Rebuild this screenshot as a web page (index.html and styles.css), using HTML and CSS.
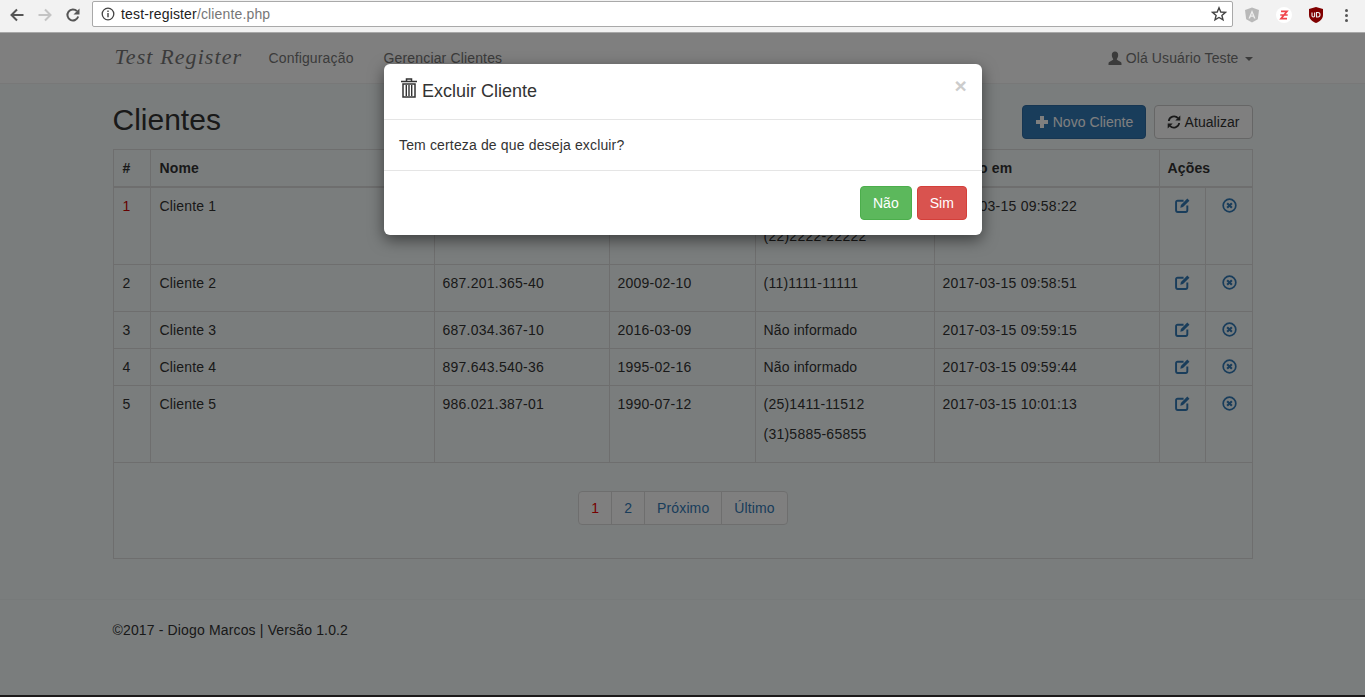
FILE: index.html
```html
<!DOCTYPE html>
<html lang="pt-BR">
<head>
    <meta charset="UTF-8">
    <title>Clientes</title>
    <link rel="stylesheet" href="styles.css">
</head>
<body>

<!-- barra do navegador -->
<div class="browser-bar">
    <svg class="nav-icon" viewBox="0 0 16 16"><path d="M14.5 8H3M8 2.5 2.5 8 8 13.5" fill="none" stroke="#555" stroke-width="2"/></svg>
    <svg class="nav-icon" viewBox="0 0 16 16"><path d="M1.5 8H13M8 2.5 13.5 8 8 13.5" fill="none" stroke="#c4c4c4" stroke-width="2"/></svg>
    <svg class="nav-icon" viewBox="0 0 16 16"><path d="M13.2 9.5A5.5 5.5 0 1 1 12 4.2" fill="none" stroke="#555" stroke-width="2"/><path d="M14.5 1.5v6h-6z" fill="#555"/></svg>
    <div class="address">
        <svg class="info-icon" viewBox="0 0 14 14"><circle cx="7" cy="7" r="5.8" fill="none" stroke="#444" stroke-width="1.3"/><path d="M7 6v4.2M7 3.6v1.4" stroke="#444" stroke-width="1.4"/></svg>
        <span class="host">test-register</span><span class="path">/cliente.php</span>
        <svg class="star-icon" viewBox="0 0 16 16"><path d="M8 1.8l1.8 4.2 4.6.4-3.5 3 1.1 4.5L8 11.5l-4 2.4 1.1-4.5-3.5-3 4.6-.4z" fill="none" stroke="#444" stroke-width="1.4"/></svg>
    </div>
    <div class="extensions">
        <svg class="ext-icon" viewBox="0 0 16 16"><path d="M8 .5 15 3l-1.2 9.300L8 15.500 2.200 12.300 1 3z" fill="#b9b9b9"/><path d="M8 3 4.500 11.500H6l.7-1.800h2.600l.7 1.800h1.500zM7.200 8.500 8 6.300l.8 2.200z" fill="#eee"/></svg>
        <svg class="ext-icon" viewBox="0 0 16 16"><circle cx="8" cy="8" r="8" fill="#fff"/><path d="M5 4.300h6L5 11.700h6M4.300 8h7.400" fill="none" stroke="#f0454c" stroke-width="1.700"/></svg>
        <svg class="ext-icon" viewBox="0 0 16 16"><path d="M8 0 15 2v6c0 4-3.500 6.800-7 8C4.500 14.800 1 12 1 8V2z" fill="#800000"/><path d="M4 5.500v3.300q0 1.200 1.300 1.200T6.600 8.800V5.500M8.500 5.500v4.500H10q2 0 2-2.200 0-2.300-2-2.300z" fill="none" stroke="#eee" stroke-width="1.100"/></svg>
        <div class="menu-dots"><i></i><i></i><i></i></div>
    </div>
</div>

<div class="page">
    <!-- menu -->
    <nav class="navbar">
        <div class="container navbar-inner">
            <a class="brand">Test Register</a>
            <a class="nav-link">Configuração</a>
            <a class="nav-link">Gerenciar Clientes</a>
            <a class="nav-link user-link">
                <svg class="icon" viewBox="0 0 14 14"><path d="M7 .5c2 0 3.200 1.500 3.200 3.500S9.200 7.400 8.800 8c0 1 .8 1.300 2.200 1.900 1.300.6 2.500 1 2.500 2.600V14H.5v-1.500c0-1.600 1.200-2 2.500-2.600C4.400 9.300 5.200 9 5.200 8 4.800 7.400 3.800 6 3.800 4S5 .5 7 .5z" fill="currentColor"/></svg>
                Olá Usuário Teste <span class="caret"></span>
            </a>
        </div>
    </nav>

    <div class="container">
        <div class="title-row">
            <h1>Clientes</h1>
            <div class="actions">
                <a class="btn btn-primary">
                    <svg class="icon" viewBox="0 0 14 14"><path d="M5 1h4v4h4v4H9v4H5V9H1V5h4z" fill="currentColor"/></svg>
                    Novo Cliente
                </a>
                <a class="btn btn-default">
                    <svg class="icon" viewBox="0 0 14 14"><path d="M1.800 6A5.300 5.300 0 0 1 11 3.200M12.200 8A5.300 5.300 0 0 1 3 10.800" fill="none" stroke="currentColor" stroke-width="1.800"/><path d="M13.300.6v5h-5zM.7 13.400v-5h5z" fill="currentColor"/></svg>
                    Atualizar
                </a>
            </div>
        </div>

        <table class="table">
            <colgroup>
                <col class="c-id"><col class="c-nome"><col class="c-cpf"><col class="c-nasc"><col class="c-tel"><col class="c-data"><col class="c-acao"><col class="c-acao2">
            </colgroup>
            <thead>
                <tr>
                    <th>#</th>
                    <th>Nome</th>
                    <th>CPF</th>
                    <th>Nascimento</th>
                    <th>Telefones</th>
                    <th>Criado em</th>
                    <th colspan="2">Ações</th>
                </tr>
            </thead>
            <tbody>
                <tr>
                    <td class="current">1</td>
                    <td>Cliente 1</td>
                    <td class="num">123.456.789-00</td>
                    <td class="num">1985-05-20</td>
                    <td class="num"><p>(11)1111-11111</p><p>(22)2222-22222</p></td>
                    <td class="num">2017-03-15 09:58:22</td>
                    <td class="act"><svg class="act-icon"><use href="#i-edit"/></svg></td>
                    <td class="act"><svg class="act-icon"><use href="#i-remove"/></svg></td>
                </tr>
                <tr>
                    <td>2</td>
                    <td>Cliente 2</td>
                    <td class="num">687.201.365-40</td>
                    <td class="num">2009-02-10</td>
                    <td class="num"><p>(11)1111-11111</p></td>
                    <td class="num">2017-03-15 09:58:51</td>
                    <td class="act"><svg class="act-icon"><use href="#i-edit"/></svg></td>
                    <td class="act"><svg class="act-icon"><use href="#i-remove"/></svg></td>
                </tr>
                <tr>
                    <td>3</td>
                    <td>Cliente 3</td>
                    <td class="num">687.034.367-10</td>
                    <td class="num">2016-03-09</td>
                    <td>Não informado</td>
                    <td class="num">2017-03-15 09:59:15</td>
                    <td class="act"><svg class="act-icon"><use href="#i-edit"/></svg></td>
                    <td class="act"><svg class="act-icon"><use href="#i-remove"/></svg></td>
                </tr>
                <tr>
                    <td>4</td>
                    <td>Cliente 4</td>
                    <td class="num">897.643.540-36</td>
                    <td class="num">1995-02-16</td>
                    <td>Não informado</td>
                    <td class="num">2017-03-15 09:59:44</td>
                    <td class="act"><svg class="act-icon"><use href="#i-edit"/></svg></td>
                    <td class="act"><svg class="act-icon"><use href="#i-remove"/></svg></td>
                </tr>
                <tr>
                    <td>5</td>
                    <td>Cliente 5</td>
                    <td class="num">986.021.387-01</td>
                    <td class="num">1990-07-12</td>
                    <td class="num"><p>(25)1411-11512</p><p>(31)5885-65855</p></td>
                    <td class="num">2017-03-15 10:01:13</td>
                    <td class="act"><svg class="act-icon"><use href="#i-edit"/></svg></td>
                    <td class="act"><svg class="act-icon"><use href="#i-remove"/></svg></td>
                </tr>
                <tr>
                    <td colspan="8" class="pager-cell">
                        <ul class="pagination">
                            <li class="active"><a>1</a></li>
                            <li><a>2</a></li>
                            <li><a>Próximo</a></li>
                            <li><a>Último</a></li>
                        </ul>
                    </td>
                </tr>
            </tbody>
        </table>
    </div>

    <footer class="footer">
        <div class="container">©2017 - Diogo Marcos | Versão 1.0.2</div>
    </footer>

    <!-- modal de exclusão -->
    <div class="backdrop"></div>
    <div class="modal">
        <div class="modal-header">
            <h4>
                <svg class="trash-icon" viewBox="0 0 18 20"><path d="M6.500 3V1h5v2M1 3.500h16M3 6h12v13H3z" fill="none" stroke="#333" stroke-width="1.500"/><path d="M6.300 7v11M9 7v11M11.700 7v11" stroke="#333" stroke-width="1.400"/></svg>
                Excluir Cliente
            </h4>
            <span class="close">×</span>
        </div>
        <div class="modal-body">Tem certeza de que deseja excluir?</div>
        <div class="modal-footer">
            <a class="btn btn-success">Não</a>
            <a class="btn btn-danger">Sim</a>
        </div>
    </div>
</div>

<div class="desktop-strip"></div>

<!-- ícones da tabela -->
<svg class="defs" width="0" height="0">
    <symbol id="i-edit" viewBox="0 0 14 14">
        <path d="M8 2.500H2.500Q1 2.500 1 4v7.500Q1 13 2.500 13H10q1.500 0 1.500-1.500V7" fill="none" stroke="currentColor" stroke-width="1.800"/>
        <path d="M11.500.5 13.500 2.500 7.500 8.500 5 9l.5-2.500z" fill="currentColor"/>
    </symbol>
    <symbol id="i-remove" viewBox="0 0 14 14">
        <circle cx="7" cy="7" r="5.900" fill="none" stroke="currentColor" stroke-width="1.600"/>
        <path d="M4.800 4.800l4.400 4.400M9.200 4.800 4.800 9.200" stroke="currentColor" stroke-width="2"/>
    </symbol>
</svg>

</body>
</html>
```

FILE: styles.css
```css
* {
    box-sizing: border-box;
}

html, body {
    height: 697px;
    margin: 0;
    overflow: hidden;
}

body {
    display: flex;
    flex-direction: column;
    font-family: 'Liberation Sans', Arial, sans-serif;
    font-size: 14px;
    line-height: 20px;
    letter-spacing: .15px;
    color: #333;
    background-color: #f5fbfb;
}

/* barra do navegador */
.browser-bar {
    height: 33px;
    flex: none;
    display: flex;
    align-items: flex-start;
    padding: 1px 0 0 9px;
    background-color: #f2f2f2;
    border-bottom: 1px solid #a8a8a8;
}

.nav-icon {
    width: 16px;
    height: 16px;
    margin: 6px 12px 0 0;
    flex: none;
}

.address {
    width: 1141px;
    height: 26px;
    margin-left: -1px;
    padding: 0 8px;
    flex: none;
    display: flex;
    align-items: center;
    background-color: #fff;
    border: 1px solid #a9a9a9;
    border-radius: 2px;
}

.info-icon {
    width: 14px;
    height: 14px;
    margin-right: 6px;
}

.host {
    color: #222;
}

.path {
    color: #777;
}

.star-icon {
    width: 16px;
    height: 16px;
    margin-left: auto;
    margin-right: -3px;
}

.extensions {
    display: flex;
    align-items: center;
    height: 28px;
    padding-left: 11px;
    gap: 16px;
}

.ext-icon {
    width: 16px;
    height: 16px;
    flex: none;
}

.menu-dots {
    margin-left: 5px;
    display: flex;
    flex-direction: column;
    gap: 2px;
}

.menu-dots i {
    width: 3px;
    height: 3px;
    border-radius: 50%;
    background-color: #555;
}

/* página */
.page {
    position: relative;
    flex: 1;
    overflow: hidden;
}

.container {
    width: 1140px;
    margin: 0 auto;
}

.icon {
    width: 14px;
    height: 14px;
    vertical-align: -2px;
}

.navbar {
    height: 51px;
    background-color: #fff;
    border-bottom: 1px solid #f0f0f0;
}

.navbar-inner {
    display: flex;
    align-items: center;
    height: 50px;
}

.brand {
    width: 156px;
    margin-top: -2px;
    padding-left: 2px;
    font-family: 'Liberation Serif', serif;
    font-style: italic;
    font-size: 22px;
    letter-spacing: 1.1px;
    color: #777;
}

.nav-link {
    margin-right: 30px;
    color: #777;
    white-space: nowrap;
}

.user-link {
    margin: 0 0 0 auto;
    letter-spacing: .1px;
}

.caret {
    display: inline-block;
    margin-left: 2px;
    vertical-align: middle;
    border-top: 4px solid;
    border-left: 4px solid transparent;
    border-right: 4px solid transparent;
}

.title-row {
    display: flex;
    justify-content: space-between;
    align-items: center;
    height: 65px;
}

h1 {
    margin: 6px 0 0;
    font-size: 30px;
    font-weight: 500;
    line-height: 33px;
    letter-spacing: 0;
}

.actions {
    display: flex;
    gap: 8px;
    margin-top: 11px;
}

.btn {
    display: inline-block;
    height: 34px;
    padding: 6px 12px;
    border: 1px solid transparent;
    border-radius: 4px;
    letter-spacing: .05px;
    white-space: nowrap;
}

.btn-primary {
    color: #fff;
    background-color: #337ab7;
    border-color: #2e6da4;
}

.btn-default {
    color: #333;
    background-color: #fff;
    border-color: #ccc;
}

.btn-success {
    color: #fff;
    background-color: #5cb85c;
    border-color: #4cae4c;
}

.btn-danger {
    color: #fff;
    background-color: #d9534f;
    border-color: #d43f3a;
}

/* tabela */
.table {
    width: 1139px;
    table-layout: fixed;
    border-collapse: collapse;
    border: 1px solid #ddd;
}

.c-id { width: 37px; }
.c-nome { width: 284px; }
.c-cpf { width: 175px; }
.c-nasc { width: 146px; }
.c-tel { width: 179px; }
.c-data { width: 225px; }
.c-acao { width: 46px; }
.c-acao2 { width: 47px; }

th, td {
    padding: 8px;
    text-align: left;
    vertical-align: top;
    border: 1px solid #ddd;
}

th:nth-child(-n+2), td:nth-child(-n+2) {
    padding-left: 9px;
}

th {
    border-bottom-width: 2px;
}

td p {
    margin: 0 0 10px;
}

td.num {
    letter-spacing: .24px;
}

td.current {
    color: #c00;
}

td.act {
    padding-left: 1px;
    padding-right: 0;
    color: #337ab7;
}

.act-icon {
    display: block;
    width: 15px;
    height: 15px;
    margin: 2px auto 0;
}

td.pager-cell {
    text-align: center;
    padding-bottom: 13px;
}

.pagination {
    display: inline-flex;
    margin: 20px 0;
    padding: 0;
    list-style: none;
    vertical-align: middle;
    letter-spacing: .12px;
}

.pagination a {
    display: block;
    padding: 6px 12px;
    margin-left: -1px;
    color: #337ab7;
    background-color: #fff;
    border: 1px solid #ddd;
}

.pagination li:first-child a {
    margin-left: 0;
    border-radius: 4px 0 0 4px;
}

.pagination li:last-child a {
    border-radius: 0 4px 4px 0;
}

.pagination .active a {
    color: #e00;
}

.footer {
    margin-top: 40px;
    padding-top: 20px;
    border-top: 1px solid #eef4f4;
}

.desktop-strip {
    height: 2px;
    flex: none;
    background-color: #1c1a1a;
}

/* modal */
.backdrop {
    position: absolute;
    inset: 0;
    background-color: rgba(0, 0, 0, .5);
}

.modal {
    position: absolute;
    top: 31px;
    left: 384px;
    width: 598px;
    background-color: #fff;
    border-radius: 6px;
    box-shadow: 0 5px 15px rgba(0, 0, 0, .5);
}

.modal-header {
    display: flex;
    justify-content: space-between;
    height: 56px;
    padding: 15px;
    border-bottom: 1px solid #e5e5e5;
}

h4 {
    display: flex;
    align-items: center;
    gap: 4px;
    margin: 2px 0 0;
    height: 20px;
    font-size: 18px;
    font-weight: 500;
    line-height: 20px;
    letter-spacing: 0;
}

.trash-icon {
    width: 18px;
    height: 20px;
    margin: -6px 0 0 1px;
}

.close {
    margin-top: -3px;
    font-size: 21px;
    font-weight: bold;
    color: #ccc;
}

.modal-body {
    height: 50px;
    padding: 15px;
}

.modal-footer {
    display: flex;
    justify-content: flex-end;
    gap: 5px;
    height: 65px;
    padding: 15px;
    border-top: 1px solid #e5e5e5;
}

.defs {
    position: absolute;
}
```
